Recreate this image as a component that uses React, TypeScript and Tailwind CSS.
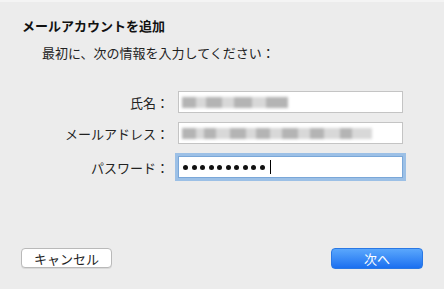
import React from 'react'

const font = { fontFamily: '"Noto Sans CJK JP", "Noto Sans", sans-serif' }

const Field = ({ label, children, focused }: { label: string; children: React.ReactNode; focused?: boolean }) => (
  <div className="flex items-center">
    <div className="w-[178px] text-right text-[13px] text-[#222] pr-[9px] leading-none">{label}</div>
    <div
      className={`w-[225px] h-[22px] bg-white flex items-center pl-[3px] ${
        focused ? 'border border-[#7aa7d8] ring-[3px] ring-[#9cc0e6]' : 'border border-[#c4c4c4]'
      }`}
    >
      {children}
    </div>
  </div>
)

// blurred stand-in for the redacted text
const Blur = ({ widths }: { widths: number[] }) => (
  <div className="flex items-center blur-[1.5px]">
    {widths.map((w, i) => (
      <span
        key={i}
        style={{ width: w }}
        className={`h-[11px] ${i % 2 === 0 ? 'bg-[#b4b4b4]' : 'bg-[#d8d8d8]'}`}
      />
    ))}
  </div>
)

export default function App() {
  return (
    <div style={font} className="w-[444px] h-[289px] bg-[#ececec] border-t-2 border-[#f4f4f4] flex flex-col">
      <div className="pl-[22px] pt-[17px] text-[13px] font-bold text-[#111] leading-none">メールアカウントを追加</div>
      <div className="pl-[42px] pt-[14px] text-[13px] text-[#222] leading-none">最初に、次の情報を入力してください：</div>

      <div className="mt-[32px] flex flex-col gap-[9px]">
        <Field label="氏名：">
          <Blur widths={[14, 10, 16, 12, 18, 14, 22]} />
        </Field>
        <Field label="メールアドレス：">
          <Blur widths={[14, 8, 12, 14, 16, 10, 14, 12, 16, 12, 14, 16, 12, 20]} />
        </Field>
        <div className="mt-[3px]">
          <Field label="パスワード：" focused>
            <div className="flex items-center gap-[3.5px] pl-[1px]">
              {Array.from({ length: 10 }).map((_, i) => (
                <span key={i} className="w-[5px] h-[5px] rounded-full bg-[#111]" />
              ))}
              <span className="ml-[2px] w-[1px] h-[14px] bg-black" />
            </div>
          </Field>
        </div>
      </div>

      <div className="mt-auto mb-[20px] px-[21px] flex justify-between">
        <button className="w-[91px] h-[20px] rounded-[4px] bg-white border border-[#b9b9b9] shadow-[0_1px_0_rgba(0,0,0,0.08)] text-[13px] text-[#222] leading-none">
          キャンセル
        </button>
        <button className="w-[92px] h-[21px] rounded-[4px] bg-gradient-to-b from-[#5aa7fc] to-[#1a6ff0] border border-[#2a78e4] text-[13px] text-white leading-none">
          次へ
        </button>
      </div>
    </div>
  )
}
